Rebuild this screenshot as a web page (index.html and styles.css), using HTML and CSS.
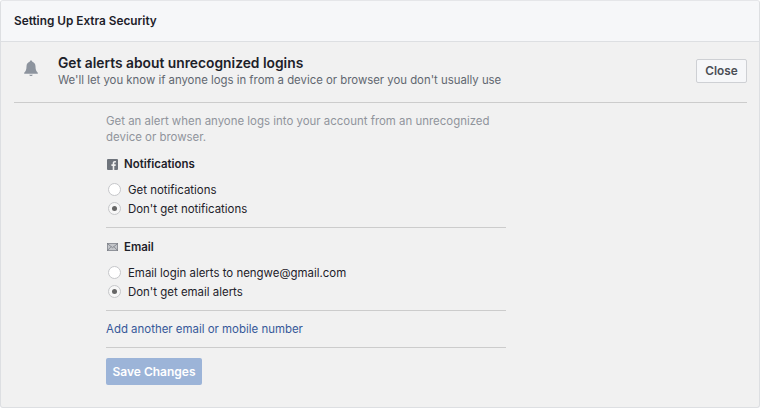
FILE: index.html
```html
<!DOCTYPE html>
<html>
  <head>
    <meta charset="utf-8">
    <title>Setting Up Extra Security</title>
    <link rel="stylesheet" href="styles.css">
  </head>

  <body>
    <div class="panel">
      <div class="panel-title">Setting Up Extra Security</div>
      <div class="panel-body">
        <div class="section-head">
          <svg class="bell" width="14" height="17" viewBox="0 0 14 17">
            <path fill="#8d949e" d="M7 .5c.8 0 1.200.5 1.300 1.200C10.400 2.300 11.500 4 11.500 6.500c0 3 .7 4.700 2.300 6.300v.9H.2v-.9C1.800 11.200 2.500 9.500 2.500 6.500 2.500 4 3.600 2.300 5.700 1.700 5.800 1 6.200.5 7 .5z"/>
            <path fill="#8d949e" d="M5.200 14.700h3.600c-.3.8-1 1.300-1.800 1.300s-1.500-.5-1.800-1.300z"/>
          </svg>
          <div class="section-text">
            <div class="section-title">Get alerts about unrecognized logins</div>
            <div class="section-sub">We'll let you know if anyone logs in from a device or browser you don't usually use</div>
          </div>
          <button class="close-btn">Close</button>
        </div>

        <div class="form">
          <p class="intro">Get an alert when anyone logs into your account from an unrecognized device or browser.</p>

          <div class="group-label">
            <svg width="11" height="11" viewBox="0 0 11 11">
              <rect width="11" height="11" rx="1" fill="#6f747c"/>
              <path fill="#f1f1f1" d="M7.300 11V6.900h1.300l.2-1.600H7.300v-1c0-.5.100-.8.800-.8h.8V2.100C8.700 2 8.300 2 7.800 2 6.600 2 5.700 2.800 5.700 4.100v1.200H4.400v1.600h1.300V11z"/>
            </svg>
            Notifications
          </div>
          <label class="radio"><span class="dot"></span>Get notifications</label>
          <label class="radio"><span class="dot on"></span>Don't get notifications</label>
          <div class="rule"></div>

          <div class="group-label">
            <svg width="11" height="8" viewBox="0 0 11 8">
              <rect x=".4" y=".4" width="10.200" height="7.200" fill="#c4c6ca" stroke="#7f838a" stroke-width=".8"/>
              <path d="M.5.700 5.500 4.700l5-4M.5 7.400l3.600-3.700M10.500 7.400 6.900 3.700" fill="none" stroke="#6f747c" stroke-width=".7"/>
            </svg>
            Email
          </div>
          <label class="radio"><span class="dot"></span>Email login alerts to nengwe@gmail.com</label>
          <label class="radio"><span class="dot on"></span>Don't get email alerts</label>
          <div class="rule"></div>

          <a class="add-link" href="#">Add another email or mobile number</a>
          <div class="rule"></div>

          <button class="save-btn">Save Changes</button>
        </div>
      </div>
    </div>
  </body>
</html>
```

FILE: styles.css
```css
*, *:before, *:after {
  box-sizing: border-box;
}
html, body {
  margin: 0;
  padding: 0;
}
body {
  width: 763px;
  height: 409px;
  overflow: hidden;
  background: #fff;
  font-family: "Inter", "Liberation Sans", sans-serif;
  font-size: 11.450px;
  color: #1d2129;
}
.panel {
  width: 760px;
  height: 408px;
  border: 1px solid #dddfe2;
  border-top-color: #e5e6e9;
  border-radius: 3px;
  background: #f1f1f1;
  overflow: hidden;
}
.panel-title {
  height: 41px;
  padding: 13px 0 0 13px;
  background: #f6f7f9;
  border-bottom: 1px solid #dddfe2;
  font-size: 11.800px;
  line-height: 14px;
  font-weight: 600;
}
.panel-body {
  padding: 0 12px 0 13px;
}
.section-head {
  display: flex;
  align-items: flex-start;
  height: 61px;
  padding-top: 12px;
  border-bottom: 1px solid #ccc;
}
.bell {
  margin: 6px 0 0 10px;
}
.section-text {
  flex: 1;
  margin-left: 20px;
}
.section-title {
  font-size: 13.800px;
  line-height: 18px;
  font-weight: 600;
}
.section-sub {
  margin-top: 1px;
  font-size: 11.370px;
  line-height: 15px;
  color: #616770;
}
.close-btn {
  width: 51px;
  height: 24px;
  margin-top: 5px;
  padding: 0;
  border: 1px solid #ced0d4;
  border-radius: 2px;
  background: #f6f7f9;
  font-family: inherit;
  font-size: 11.800px;
  font-weight: 600;
  color: #4b4f56;
}
.form {
  width: 400px;
  margin-left: 92px;
}
.intro {
  margin: 10px 0 0;
  width: 390px;
  line-height: 16px;
  color: #90949c;
}
.group-label {
  display: flex;
  align-items: center;
  gap: 6px;
  margin: 11px 0 8px 1px;
  height: 16px;
  font-weight: 600;
}
.radio {
  display: flex;
  align-items: center;
  height: 19px;
  margin-left: 2px;
}
.dot {
  display: flex;
  align-items: center;
  justify-content: center;
  width: 13px;
  height: 13px;
  margin-right: 7px;
  border: 1px solid #c6c7ca;
  border-radius: 50%;
  background: #fff;
}
.dot.on {
  background: #f7f7f7;
}
.dot.on:before {
  content: "";
  width: 5px;
  height: 5px;
  border-radius: 50%;
  background: #666;
}
.rule {
  height: 1px;
  margin-top: 9px;
  background: #ccc;
}
.add-link {
  display: block;
  margin-top: 10px;
  line-height: 16px;
  color: #365899;
  text-decoration: none;
}
.add-link + .rule {
  margin-top: 10px;
}
.save-btn {
  display: block;
  width: 96px;
  height: 27px;
  margin-top: 10px;
  padding: 0;
  border: 0;
  border-radius: 2px;
  background: #9cb4d8;
  font-family: inherit;
  font-size: 12px;
  font-weight: 600;
  color: #fff;
}
```
